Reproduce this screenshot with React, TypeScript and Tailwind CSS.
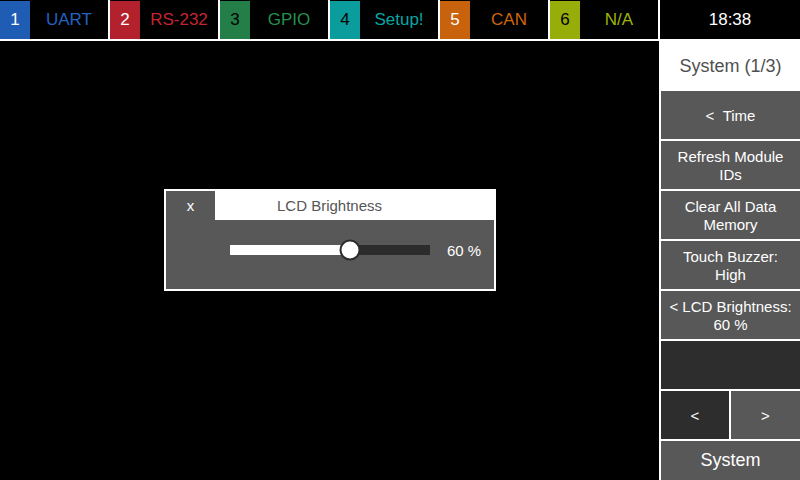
import React from 'react';

const TABS = [
  { n: '1', label: 'UART', box: 'bg-[#1f5db5] text-white', text: 'text-[#2462c2]' },
  { n: '2', label: 'RS-232', box: 'bg-[#b3222c] text-white', text: 'text-[#c42532]' },
  { n: '3', label: 'GPIO', box: 'bg-[#237f47] text-black', text: 'text-[#25904f]' },
  { n: '4', label: 'Setup!', box: 'bg-[#0b9d9d] text-black', text: 'text-[#0aa5a5]' },
  { n: '5', label: 'CAN', box: 'bg-[#c8620c] text-white', text: 'text-[#d0650e]' },
  { n: '6', label: 'N/A', box: 'bg-[#97ad0a] text-black', text: 'text-[#9db30c]' },
];

const MENU = [
  ['<\u00a0\u00a0Time'],
  ['Refresh Module', 'IDs'],
  ['Clear All Data', 'Memory'],
  ['Touch Buzzer:', 'High'],
  ['< LCD Brightness:', '60 %'],
];

export default function App() {
  const brightness = 60;

  return (
    <div className="w-[800px] h-[480px] bg-white flex flex-col overflow-hidden font-['Liberation_Sans',Arial,sans-serif]">
      {/* Tab bar */}
      <div className="h-[39px] flex gap-[2px] shrink-0">
        {TABS.map((t) => (
          <div key={t.n} className="w-[108px] bg-black flex pt-[1px]">
            <div className={`w-[30px] flex items-center justify-center text-[17px] ${t.box}`}>{t.n}</div>
            <div className={`flex-1 flex items-center justify-center text-[17px] ${t.text}`}>{t.label}</div>
          </div>
        ))}
        <div className="flex-1 bg-black flex items-center justify-center pt-[1px] text-[17px] text-white">18:38</div>
      </div>

      <div className="flex flex-1 min-h-0">
        {/* Main area */}
        <div className="w-[659px] mt-[2px] bg-black pl-[164px] pt-[148px]">
          <div className="w-[332px] h-[102px] border-2 border-white bg-[#585858] flex flex-col">
            <div className="h-[29px] flex">
              <div className="w-[49px] flex items-center justify-center pt-[2px] text-[15px] text-white">x</div>
              <div className="flex-1 bg-white flex items-center justify-center pt-[2px] text-[15px] text-[#555555] pr-[50px]">
                LCD Brightness
              </div>
            </div>
            <div className="flex items-center pl-[64px] pt-[18px]">
              <div className="relative w-[200px] h-[10px] bg-[#2c2c2c]">
                <div className="h-full bg-white" style={{ width: `${brightness}%` }} />
                <div
                  className="absolute top-1/2 w-[21px] h-[21px] -translate-x-1/2 -translate-y-1/2 rounded-full bg-white border-2 border-[#2c2c2c]"
                  style={{ left: `${brightness}%` }}
                />
              </div>
              <span className="ml-[17px] pt-[2px] text-[15px] text-white">{brightness} %</span>
            </div>
          </div>
        </div>

        {/* Side menu */}
        <div className="flex-1 pl-[2px] flex flex-col gap-[2px]">
          <div className="h-[50px] flex items-center justify-center pt-[5px] text-[18px] text-[#505050]">System (1/3)</div>
          {MENU.map((lines, i) => (
            <div key={i} className="h-[48px] bg-[#585858] flex flex-col items-center justify-center pt-[2px] text-[15px] leading-[18px] text-white">
              {lines.map((l) => (
                <span key={l}>{l}</span>
              ))}
            </div>
          ))}
          <div className="h-[48px] bg-[#2d2d2d]" />
          <div className="h-[48px] flex gap-[2px]">
            <div className="w-[68px] bg-[#2d2d2d] flex items-center justify-center pt-[2px] text-[15px] text-white">&lt;</div>
            <div className="flex-1 bg-[#585858] flex items-center justify-center pt-[2px] text-[15px] text-white">&gt;</div>
          </div>
          <div className="flex-1 bg-[#585858] flex items-center justify-center text-[18px] text-white">System</div>
        </div>
      </div>
    </div>
  );
}
